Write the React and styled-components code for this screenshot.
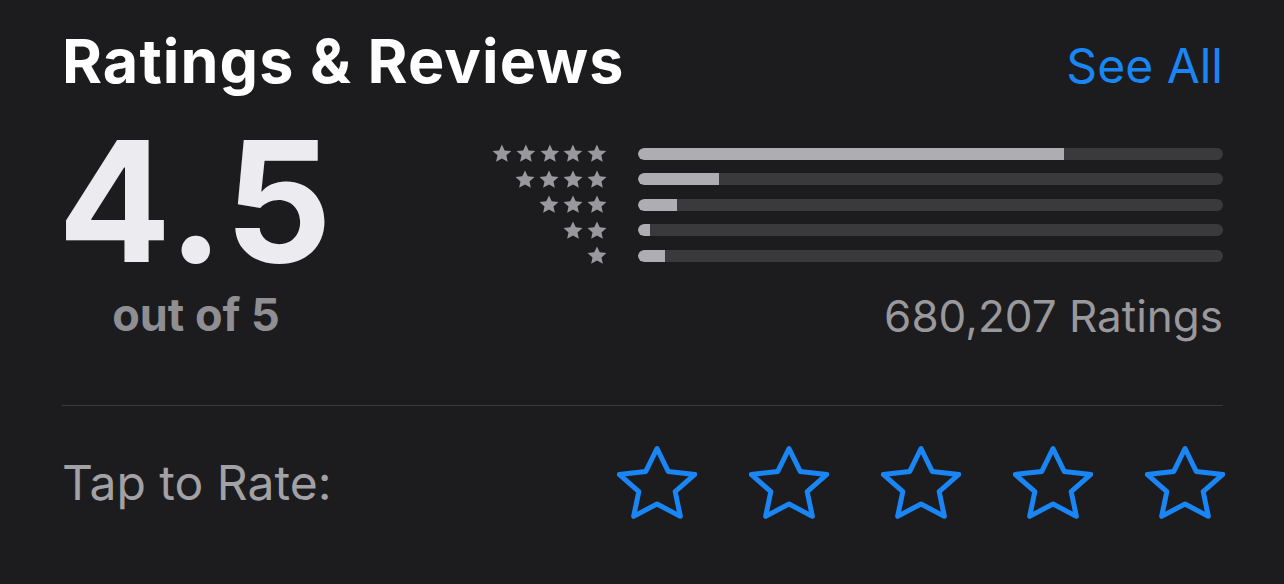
import React from 'react';
import styled, { createGlobalStyle } from 'styled-components';

const GlobalStyle = createGlobalStyle`
  html, body {
    margin: 0;
    padding: 0;
    background: #1c1c1e;
  }
  body {
    font-family: Inter, "Noto Sans", "Liberation Sans", sans-serif;
  }
`;

const Page = styled.div`
  width: 1284px;
  height: 584px;
  box-sizing: border-box;
  padding: 26px 61px 0 62px;
  background: #1c1c1e;
  display: flex;
  flex-direction: column;
`;

const Header = styled.div`
  display: flex;
  justify-content: space-between;
  align-items: baseline;
`;

const Title = styled.h2`
  margin: 0;
  font-size: 61px;
  line-height: 70px;
  font-weight: 700;
  letter-spacing: 1.1px;
  color: #ffffff;
`;

const SeeAll = styled.a`
  font-size: 48px;
  font-weight: 400;
  color: #1a86f5;
  text-decoration: none;
  cursor: pointer;
`;

const Summary = styled.div`
  display: flex;
  align-items: flex-start;
  margin-top: 16px;
`;

const Score = styled.div`
  display: flex;
  flex-direction: column;
  align-items: center;
  width: 268px;
`;

const Big = styled.div`
  font-size: 168px;
  font-weight: 700;
  line-height: 178px;
  letter-spacing: 2px;
  color: #ebebf0;
`;

const OutOf = styled.div`
  font-size: 45px;
  font-weight: 700;
  line-height: 44px;
  color: #8e8e93;
  margin-top: 3px;
`;

const Histogram = styled.div`
  margin-left: auto;
  width: 731px;
  display: flex;
  flex-direction: column;
  padding-top: 29px;
`;

const Row = styled.div`
  display: grid;
  grid-template-columns: 115px 1fr;
  column-gap: 31px;
  align-items: center;
  height: 25.5px;
`;

const StarSet = styled.div`
  display: flex;
  justify-content: flex-end;
  gap: 4px;
  svg {
    width: 20px;
    height: 19px;
    fill: #98989d;
  }
`;

const Track = styled.div`
  height: 12px;
  border-radius: 6px;
  background: #3a3a3c;
  overflow: hidden;
`;

const Fill = styled.div`
  height: 100%;
  border-radius: 6px 0 0 6px;
  background: #aeaeb2;
`;

const Count = styled.div`
  text-align: right;
  font-size: 44px;
  line-height: 54px;
  color: #98989d;
  margin-top: 20px;
`;

const Divider = styled.hr`
  border: 0;
  border-top: 1px solid #3a3a3c;
  margin: 62px 0 0;
`;

const RateRow = styled.div`
  display: flex;
  justify-content: space-between;
  align-items: center;
  margin-top: 39px;
`;

const RateLabel = styled.div`
  font-size: 48px;
  color: #a1a1a6;
  margin-top: 2px;
`;

const RateStars = styled.div`
  display: flex;
  gap: 52px;
  margin-right: -2px;
  svg {
    width: 80px;
    height: 74px;
    fill: none;
    stroke: #1a86f5;
    stroke-width: 5;
    stroke-linejoin: round;
  }
`;

function starPoints(cx, cy, R, ratio, sx) {
  const pts = [];
  for (let i = 0; i < 10; i++) {
    const a = ((90 - i * 36) * Math.PI) / 180;
    const rad = i % 2 === 0 ? R : R * ratio;
    pts.push(`${(cx + rad * Math.cos(a) * sx).toFixed(2)},${(cy - rad * Math.sin(a)).toFixed(2)}`);
  }
  return pts.join(' ');
}

const bigStar = starPoints(40, 41, 37.5, 0.48, 1.06);
const smallStar = starPoints(10, 10, 9.6, 0.47, 1.04);

const SmallStar = () => (
  <svg viewBox="0 0 20 19">
    <polygon points={smallStar} />
  </svg>
);

const OutlineStar = () => (
  <svg viewBox="0 0 80 74">
    <polygon points={bigStar} />
  </svg>
);

const bars = [
  { stars: 5, pct: 72.8 },
  { stars: 4, pct: 13.8 },
  { stars: 3, pct: 6.6 },
  { stars: 2, pct: 2.1 },
  { stars: 1, pct: 4.6 },
];

export default function App() {
  return (
    <>
      <GlobalStyle />
      <Page>
        <Header>
          <Title>Ratings &amp; Reviews</Title>
          <SeeAll>See All</SeeAll>
        </Header>
        <Summary>
          <Score>
            <Big>4.5</Big>
            <OutOf>out of 5</OutOf>
          </Score>
          <Histogram>
            {bars.map((b) => (
              <Row key={b.stars}>
                <StarSet>
                  {Array.from({ length: b.stars }).map((_, i) => (
                    <SmallStar key={i} />
                  ))}
                </StarSet>
                <Track>
                  <Fill style={{ width: `${b.pct}%` }} />
                </Track>
              </Row>
            ))}
            <Count>680,207 Ratings</Count>
          </Histogram>
        </Summary>
        <Divider />
        <RateRow>
          <RateLabel>Tap to Rate:</RateLabel>
          <RateStars>
            {[0, 1, 2, 3, 4].map((i) => (
              <OutlineStar key={i} />
            ))}
          </RateStars>
        </RateRow>
      </Page>
    </>
  );
}
